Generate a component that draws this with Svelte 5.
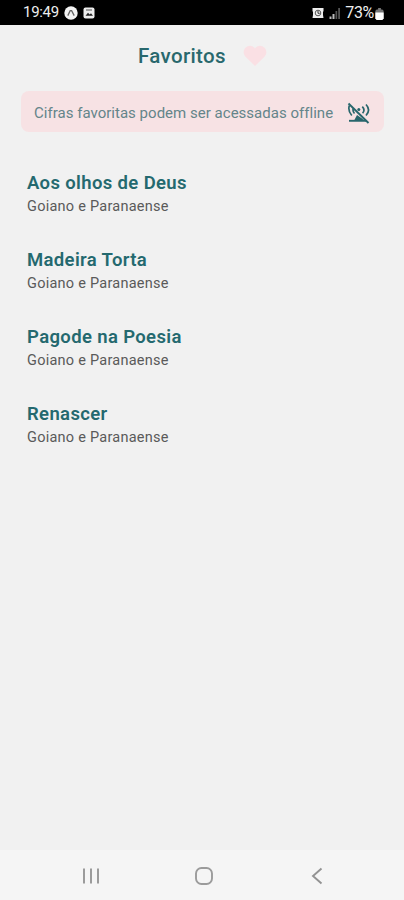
<script>
	const songs = [
		{ title: 'Aos olhos de Deus', artist: 'Goiano e Paranaense' },
		{ title: 'Madeira Torta', artist: 'Goiano e Paranaense' },
		{ title: 'Pagode na Poesia', artist: 'Goiano e Paranaense' },
		{ title: 'Renascer', artist: 'Goiano e Paranaense' }
	];
</script>

<div class="screen">
	<div class="status">
		<div class="status-left">
			<span class="clock">19:49</span>
			<svg width="14" height="14" viewBox="0 0 14 14">
				<circle cx="7" cy="7" r="6.7" fill="#f4f4f4" />
				<path d="M3.8 9.600 6.200 4.600h1.400l2.600 5" fill="none" stroke="#666" stroke-width="1.3" />
			</svg>
			<svg width="12" height="12" viewBox="0 0 12 12">
				<rect x=".5" y=".5" width="11" height="11" rx="2" fill="#eee" />
				<path d="M2.500 8.800 5 5.800l1.700 1.700L8 6.200l2 2.600z" fill="#222" />
				<path d="M3 3h6" stroke="#555" />
			</svg>
		</div>
		<div class="status-right">
			<svg width="12" height="12" viewBox="0 0 12 12">
				<path d="M.5 1h11v3l-.5 1v3l.5 3H.5L1 8V5L.5 4z" fill="#eee" />
				<circle cx="6" cy="6" r="2.800" fill="none" stroke="#555" />
				<path d="M6 4v2.300h1.700" fill="none" stroke="#333" />
			</svg>
			<svg class="signal" width="11" height="11" viewBox="0 0 11 11">
				<path d="M.5 8.500h2V11h-2zM3.500 6h2v5h-2z" fill="#bbb" />
				<path d="M6.500 3h1.700v8H6.500zM9.200 0H11v11H9.200z" fill="#555" />
			</svg>
			<span class="percent">73%</span>
			<svg class="battery" width="9" height="12" viewBox="0 0 9 13">
				<path d="M3 0h3v1.500h1.500L9 3v8.500L7.500 13h-6L0 11.500V3l1.500-1.500H3z" fill="#777" />
				<path d="M0 5h9v6.500L7.500 13h-6L0 11.500z" fill="#fff" />
			</svg>
		</div>
	</div>

	<header>
		<h1>Favoritos</h1>
		<svg width="24" height="22" viewBox="0 0 24 22">
			<path d="M12 21 2.500 11.700C-.6 8.500.3 3.200 4.200 1.400 7-.1 10.200.8 12 3.400 13.800.8 17-.1 19.800 1.400c3.900 1.800 4.800 7.100 1.700 10.300z" fill="#fae0e4" />
		</svg>
	</header>

	<div class="notice">
		<span>Cifras favoritas podem ser acessadas offline</span>
		<svg width="24" height="22" viewBox="0 0 24 22" fill="none" stroke="#28666c">
			<path d="M1.500 1.500 21.500 21" stroke-width="1.900" />
			<path d="M2.300 3.500C1.300 7 2 10.500 4.800 13.500M6.200 6.500C5.700 8.500 6 10 7.500 11.500" stroke-width="1.700" />
			<path d="M19 2.500c3.500 3.700 3.200 7.500 0 11M15.300 4.700c2.200 2.200 2.200 4.400.3 6.600" stroke-width="1.700" />
			<circle cx="11.800" cy="7.600" r="1.500" fill="#28666c" stroke="none" />
			<path d="M10 13 7 18.700h10.500L15 16.500z" fill="#28666c" stroke="none" />
			<path d="M2 18.800h17" stroke-width="1.900" />
		</svg>
	</div>

	<ul>
		{#each songs as song}
			<li>
				<h2>{song.title}</h2>
				<p>{song.artist}</p>
			</li>
		{/each}
	</ul>

	<nav>
		<svg width="18" height="18" viewBox="0 0 18 18">
			<path d="M2 1.500v15M9 1.500v15M16 1.500v15" stroke="#9b9b9b" stroke-width="2" />
		</svg>
		<svg width="18" height="18" viewBox="0 0 18 18">
			<rect x="1" y="1" width="16" height="16" rx="5.500" fill="none" stroke="#9b9b9b" stroke-width="1.900" />
		</svg>
		<svg width="18" height="18" viewBox="0 0 18 18">
			<path d="M13.500 1.500 5 9l8.500 7.500" fill="none" stroke="#929292" stroke-width="1.900" />
		</svg>
	</nav>
</div>

<style>
	:global(body) {
		background: #f1f1f1;
	}

	.screen {
		display: flex;
		flex-direction: column;
		height: 900px;
		background: #f1f1f1;
		font-family: Roboto, sans-serif;
	}

	.status {
		display: flex;
		justify-content: space-between;
		height: 25px;
		padding: 0 20px 0 23px;
		background: #000;
		color: #eee;
	}

	.status-left,
	.status-right {
		display: flex;
		align-items: center;
	}

	.status-left {
		gap: 5px;
	}

	.clock,
	.percent {
		font-size: 15px;
		line-height: 25px;
		letter-spacing: -0.3px;
	}

	.percent {
		margin-left: 5px;
		font-size: 16px;
	}

	.signal {
		margin-left: 5px;
		margin-top: 2px;
	}

	.battery {
		margin-left: 1px;
		margin-top: 3px;
	}

	header {
		display: flex;
		align-items: center;
		gap: 17px;
		height: 62px;
		padding: 0 0 0 138px;
		box-sizing: border-box;
	}

	h1,
	h2,
	p,
	ul {
		margin: 0;
		padding: 0;
	}

	h1 {
		color: #28686d;
		font-size: 20.5px;
		font-weight: 500;
		line-height: 24px;
		letter-spacing: 0.35px;
	}

	.notice {
		display: flex;
		align-items: center;
		justify-content: space-between;
		height: 41px;
		margin: 4px 20px 0 21px;
		padding: 2px 13px 0 13px;
		box-sizing: border-box;
		border-radius: 8px;
		background: #f7e2e4;
		color: #64858a;
		font-size: 15px;
		white-space: nowrap;
	}

	.notice span {
		letter-spacing: 0.02px;
	}

	ul {
		flex: 1;
		padding: 39px 27px 0;
		list-style: none;
	}

	li {
		height: 77px;
	}

	h2 {
		color: #24696f;
		font-size: 18.5px;
		font-weight: 600;
		line-height: 24px;
		letter-spacing: 0.36px;
	}

	p {
		color: #5a5a5a;
		font-size: 14.5px;
		line-height: 24px;
		letter-spacing: 0.25px;
	}

	nav {
		display: flex;
		align-items: center;
		justify-content: space-between;
		height: 50px;
		padding: 2px 78px 0 82px;
		box-sizing: border-box;
		background: #f5f5f5;
	}
</style>
